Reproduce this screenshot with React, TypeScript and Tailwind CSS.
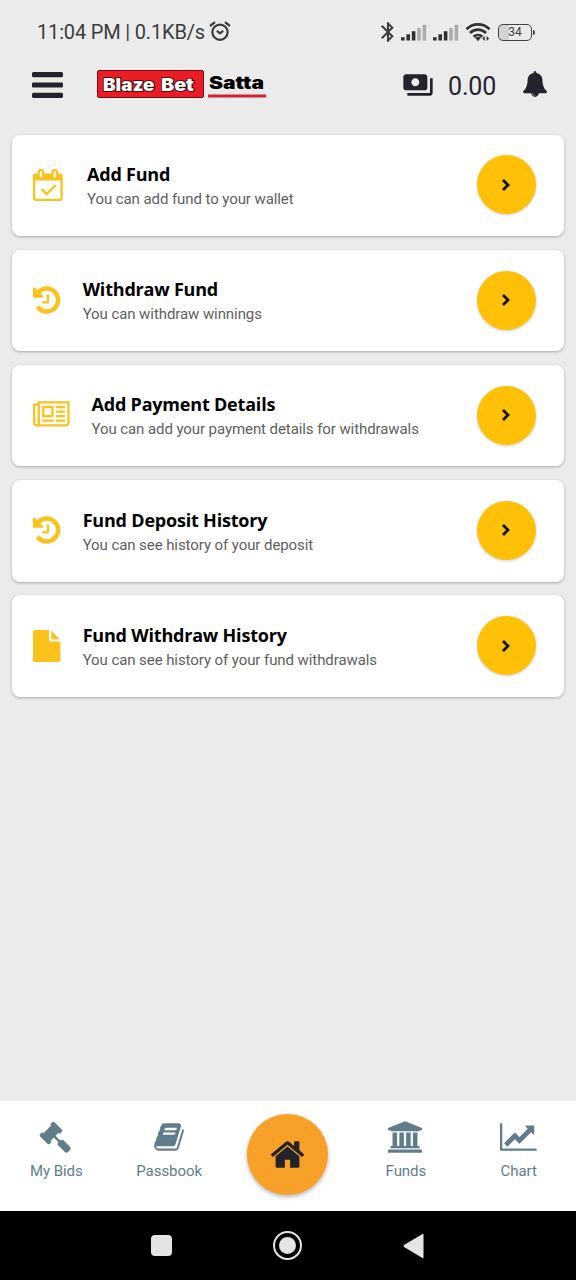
import type { ReactNode } from "react";
import { MdBluetooth, MdPayments } from "react-icons/md";

interface GlyphProps {
  box: string;
  d: string;
  className: string;
}

function Glyph({ box, d, className }: GlyphProps) {
  return (
    <svg viewBox={box} fill="currentColor" className={className} aria-hidden="true">
      <path d={d} />
    </svg>
  );
}

const paths = {
  bars: "M1664 1344v128q0 26-19 45t-45 19h-1408q-26 0-45-19t-19-45v-128q0-26 19-45t45-19h1408q26 0 45 19t19 45zm0-512v128q0 26-19 45t-45 19h-1408q-26 0-45-19t-19-45v-128q0-26 19-45t45-19h1408q26 0 45 19t19 45zm0-512v128q0 26-19 45t-45 19h-1408q-26 0-45-19t-19-45v-128q0-26 19-45t45-19h1408q26 0 45 19t19 45z",
  bell: "M912 1696q0-16-16-16-59 0-101.5-42.5t-42.5-101.5q0-16-16-16t-16 16q0 73 51.5 124.5t124.5 51.5q16 0 16-16zm816-288q0 52-38 90t-90 38h-448q0 106-75 181t-181 75-181-75-75-181h-448q-52 0-90-38t-38-90q50-42 91-88t85-119.5 74.5-158.5 50-206 19.5-260q0-152 117-282.5t307-158.5q-8-19-8-39 0-40 28-68t68-28 68 28 28 68q0 20-8 39 190 28 307 158.5t117 282.5q0 139 19.5 260t50 206 74.5 158.5 85 119.5 91 88z",
  calendar:
    "M1303 964l-512 512q-10 9-23 9t-23-9l-288-288q-9-10-9-23t9-22l46-46q9-9 22-9t23 9l220 220 444-444q10-9 23-9t22 9l46 46q9 9 9 22t-9 23zm-1175 700h1408v-1024h-1408v1024zm384-1216v-288q0-14-9-23t-23-9h-64q-14 0-23 9t-9 23v288q0 14 9 23t23 9h64q14 0 23-9t9-23zm768 0v-288q0-14-9-23t-23-9h-64q-14 0-23 9t-9 23v288q0 14 9 23t23 9h64q14 0 23-9t9-23zm384-64v1280q0 52-38 90t-90 38h-1408q-52 0-90-38t-38-90v-1280q0-52 38-90t90-38h128v-96q0-66 47-113t113-47h64q66 0 113 47t47 113v96h384v-96q0-66 47-113t113-47h64q66 0 113 47t47 113v96h128q52 0 90 38t38 90z",
  history:
    "M1664 896q0 156-61 298t-164 245-245 164-298 61q-172 0-327-72.5t-264-204.5q-7-10-6.5-22.5t8.5-20.5l137-138q10-9 25-9 16 2 23 12 73 95 179 147t225 52q104 0 198.5-40.5t163.5-109.5 109.5-163.5 40.5-198.5-40.5-198.5-109.5-163.5-163.5-109.5-198.5-40.5q-98 0-188 35.5t-160 101.5l137 138q31 30 14 69-17 40-59 40h-448q-26 0-45-19t-19-45v-448q0-42 40-59 39-17 69 14l130 129q107-101 244.5-156.5t284.5-55.5q156 0 298 61t245 164 164 245 61 298zm-640-288v448q0 14-9 23t-23 9h-320q-14 0-23-9t-9-23v-64q0-14 9-23t23-9h224v-352q0-14 9-23t23-9h64q14 0 23 9t9 23z",
  newspaper:
    "M1024 512h-384v384h384v-384zm128 640v128h-640v-128h640zm0-768v640h-640v-640h640zm640 768v128h-512v-128h512zm0-256v128h-512v-128h512zm0-256v128h-512v-128h512zm0-256v128h-512v-128h512zm-1536 960v-960h-128v960q0 26 19 45t45 19 45-19 19-45zm1664 0v-1088h-1536v1088q0 33-11 64h1483q26 0 45-19t19-45zm128-1216v1216q0 80-56 136t-136 56h-1664q-80 0-136-56t-56-136v-1088h256v-128h1792z",
  file: "M1152 512v-472q22 14 36 28l408 408q14 14 28 36h-472zm-128 32q0 40 28 68t68 28h544v1056q0 40-28 68t-68 28h-1344q-40 0-68-28t-28-68v-1600q0-40 28-68t68-28h800v544z",
  gavel:
    "M1771 1536q0 53-37 90l-107 108q-39 37-91 37-53 0-90-37l-363-364q-38-36-38-90 0-53 43-96l-256-256-126 126q-14 14-34 14t-34-14q2 2 12.5 12t12.5 13 10 11.5 10 13.5 6 13.5 5.5 16.5 1.5 18q0 38-28 68-3 3-16.5 18t-19 20.5-18.5 16.5-22 15.5-22 9-26 4.5q-40 0-68-28l-408-408q-28-28-28-68 0-13 4.5-26t9-22 15.5-22 16.5-18.5 20.5-19 18-16.5q30-28 68-28 10 0 18 1.5t16.5 5.5 13.5 6 13.5 10 11.5 10 13 12.5 12 12.5q-14-14-14-34t14-34l348-348q14-14 34-14t34 14q-2-2-12.5-12t-12.5-13-10-11.5-10-13.5-6-13.5-5.5-16.5-1.5-18q0-38 28-68 3-3 16.5-18t19-20.5 18.5-16.5 22-15.5 22-9 26-4.5q40 0 68 28l408 408q28 28 28 68 0 13-4.5 26t-9 22-15.5 22-16.5 18.5-20.5 19-18 16.5q-30 28-68 28-10 0-18-1.5t-16.5-5.5-13.5-6-13.5-10-11.5-10-13-12.5-12-12.5q14 14 14 34t-14 34l-126 126 256 256q43-43 96-43 52 0 91 37l363 363q37 39 37 91z",
  book: "M1703 478q40 57 18 129l-275 906q-19 64-76.5 107.5t-122.5 43.5h-923q-77 0-148.5-53.5t-99.5-131.5q-24-67-2-127 0-4 3-27t4-37q1-8-3-21.5t-3-19.5q2-11 8-21t16.5-23.5 16.5-23.5q23-38 45-91.5t30-91.5q3-10 .5-30t-.5-28q3-11 17-28t17-23q21-36 42-92t25-90q1-9-2.5-32t.5-28q4-13 22-30.5t22-22.5q19-26 42.5-84.5t27.5-96.5q1-8-3-25.5t-2-26.5q2-8 9-18t18-23 17-21q8-12 16.5-30.5t15-35 16-36 19.5-32 26.5-23.5 36-11.5 47.5 5.5l-1 3q38-9 51-9h761q74 0 114 56t18 130l-274 906q-36 119-71.5 153.5t-128.5 34.5h-869q-27 0-38 15-11 16-1 43 24 70 144 70h923q29 0 56-15.5t35-41.5l300-987q7-22 5-57 38 15 59 43zm-1064 2q-4 13 2 22.5t20 9.5h608q13 0 25.5-9.5t16.5-22.5l21-64q4-13-2-22.5t-20-9.5h-608q-13 0-25.5 9.5t-16.5 22.5zm-83 256q-4 13 2 22.5t20 9.5h608q13 0 25.5-9.5t16.5-22.5l21-64q4-13-2-22.5t-20-9.5h-608q-13 0-25.5 9.5t-16.5 22.5z",
  home: "M1472 992v480q0 26-19 45t-45 19h-384v-384h-256v384h-384q-26 0-45-19t-19-45v-480q0-1 .5-3t.5-3l575-474 575 474q1 2 1 6zm223-69l-62 74q-8 9-21 11h-3q-13 0-21-7l-692-577-692 577q-12 8-24 7-13-2-21-11l-62-74q-8-10-7-23.5t11-21.5l719-599q32-26 76-26t76 26l244 204v-195q0-14 9-23t23-9h192q14 0 23 9t9 23v408l219 182q10 8 11 21.5t-7 23.5z",
  bank: "M960 0l960 384v128h-128q0 26-20.5 45t-48.5 19h-1526q-28 0-48.5-19t-20.5-45h-128v-128zm-704 640h256v768h128v-768h256v768h128v-768h256v768h128v-768h256v768h59q28 0 48.5 19t20.5 45v64h-1664v-64q0-26 20.5-45t48.5-19h59v-768zm1595 960q28 0 48.5 19t20.5 45v128h-1920v-128q0-26 20.5-45t48.5-19h1782z",
  chart:
    "M2048 1536v128h-2048v-1536h128v1408h1920zm-128-1248v435q0 21-19.5 29.5t-35.5-7.5l-121-121-633 633q-10 10-23 10t-23-10l-233-233-416 416-192-192 585-585q10-10 23-10t23 10l233 233 464-464-121-121q-16-16-7.5-35.5t29.5-19.5h435q14 0 23 9t9 23z",
};

const funds = [
  {
    title: "Add Fund",
    text: "You can add fund to your wallet",
    box: "0 0 1664 1792",
    d: paths.calendar,
    size: "w-[29.7px] mr-[24.1px]",
  },
  {
    title: "Withdraw Fund",
    text: "You can withdraw winnings",
    box: "128 0 1536 1792",
    d: paths.history,
    size: "w-[27.4px] mr-[22.1px]",
  },
  {
    title: "Add Payment Details",
    text: "You can add your payment details for withdrawals",
    box: "0 0 2048 1792",
    d: paths.newspaper,
    size: "w-[36.6px] mr-[21.7px]",
  },
  {
    title: "Fund Deposit History",
    text: "You can see history of your deposit",
    box: "128 0 1536 1792",
    d: paths.history,
    size: "w-[27.4px] mr-[22.1px]",
  },
  {
    title: "Fund Withdraw History",
    text: "You can see history of your fund withdrawals",
    box: "128 0 1536 1792",
    d: paths.file,
    size: "w-[27.4px] mr-[22.1px]",
  },
];

function AlarmIcon() {
  return (
    <svg viewBox="0 0 22 20" fill="none" stroke="currentColor" strokeWidth="2.2" className="mb-[2px] h-5 w-[22px]">
      <circle cx="11" cy="11.2" r="7.6" />
      <path d="M7.8 9.8 11 12.400l3.200-2.500M1 5 6 1.200M21 5 16 1.200" />
    </svg>
  );
}

function SignalIcon() {
  return (
    <svg viewBox="0 0 26 17" className="h-[17px] w-[26px]" fill="#333">
      <rect x="0" y="13.2" width="3.6" height="3.3" />
      <rect x="5.4" y="10.3" width="3.6" height="6.2" />
      <rect x="10.8" y="7.2" width="3.6" height="9.3" />
      <rect x="16.2" y="4" width="3.6" height="12.5" fill="#acacac" />
      <rect x="21.6" y="0.8" width="3.6" height="15.7" fill="#acacac" />
    </svg>
  );
}

function WifiIcon() {
  return (
    <svg viewBox="0 0 26 20" fill="none" stroke="#333" strokeWidth="2.7" className="h-5 w-[26px]">
      <path d="M1.500 7.200C8 .7 18 .7 24.500 7.200M5 11c4.600-4.400 11.400-4.400 16 0M8.600 14.700c2.500-2.300 6.300-2.300 8.800 0" />
      <path d="M10 15.800q3-2 6 0l-3 3.400z" fill="#333" stroke="none" />
      <path d="M19.800 14v5l-2.600-2.500zM21.600 14v5l2.600-2.500z" fill="#333" stroke="none" />
    </svg>
  );
}

function StatusBar() {
  return (
    <div className="flex h-[64px] items-center pr-[41px] pl-[37px] text-[#3c3c3c]">
      <span className="w-[172px] whitespace-nowrap text-[20px] leading-none tracking-[-0.17px]">
        11:04 PM | 0.1KB/s
      </span>
      <AlarmIcon />
      <div className="ml-auto flex items-center">
        <MdBluetooth className="mr-[1px] h-6 w-6" />
        <SignalIcon />
        <span className="w-[6px]" />
        <SignalIcon />
        <span className="w-[6px]" />
        <WifiIcon />
        <div className="ml-[7px] flex h-[17px] w-[34px] items-center justify-center rounded-[5px] border-[1.5px] border-[#444] bg-linear-to-r from-[#d3d3d3] from-30% to-transparent to-30% text-[12px] leading-none">
          34
        </div>
        <span className="ml-[1px] h-[5px] w-[2px] rounded-r bg-[#444]" />
      </div>
    </div>
  );
}

function Logo() {
  return (
    <svg
      viewBox="0 0 172 30"
      className="mb-[2px] ml-[33px] h-[30px] w-[172px]"
      fontFamily="Inter, sans-serif"
      fontWeight="900"
      fontSize="17"
    >
      <rect x="1.5" y="1.500" width="106" height="27" rx="1.500" fill="#ed1c24" stroke="#6b1013" />
      <g fill="#fff" stroke="#2b0505" strokeWidth="1.600" paintOrder="stroke">
        <text x="7" y="21.500" textLength="51.500" lengthAdjust="spacingAndGlyphs">
          Blaze
        </text>
        <text x="65" y="21.500" textLength="33" lengthAdjust="spacingAndGlyphs">
          Bet
        </text>
      </g>
      <text x="113" y="20" textLength="55" lengthAdjust="spacingAndGlyphs" fill="#000">
        Satta
      </text>
      <rect x="112" y="25.500" width="58" height="3" fill="#d2232a" />
    </svg>
  );
}

function Header() {
  return (
    <header className="flex h-[42px] items-center pr-[29px] pl-[32px] text-[#23232d]">
      <Glyph box="128 256 1536 1280" d={paths.bars} className="mb-[1px] h-[26px] w-[31px]" />
      <Logo />
      <MdPayments className="ml-auto h-8 w-8" />
      <span className="mr-[27px] ml-[14px] pt-[2px] text-[25px] leading-none tracking-[-0.2px]">0.00</span>
      <Glyph box="64 0 1664 1792" d={paths.bell} className="mb-[2px] h-[26px] w-6" />
    </header>
  );
}

function FundCard({ item }: { item: (typeof funds)[number] }) {
  return (
    <div className="flex h-[101.5px] items-center rounded-[8px] bg-white pr-[28px] pl-[21.2px] shadow-[0_1px_3px_rgba(0,0,0,0.28)]">
      <Glyph box={item.box} d={item.d} className={`mb-[1px] h-8 shrink-0 text-[#fbc21b] ${item.size}`} />
      <div className="flex flex-1 flex-col pt-[1.500px]">
        <h2 className="font-['Open_Sans'] text-[18px] leading-[26px] font-bold tracking-[-0.2px] text-black">
          {item.title}
        </h2>
        <p className="text-[15px] leading-[24px] tracking-[-0.08px] text-[#606060]">{item.text}</p>
      </div>
      <button className="mb-[1px] flex size-[59px] items-center justify-center rounded-full bg-[#ffc107] pr-[1px] shadow-[0_1px_3px_rgba(0,0,0,0.2)]">
        <svg viewBox="0 0 12 14" className="h-[14px] w-3" fill="none" stroke="#111" strokeWidth="2.800">
          <path d="M3 2l5 5-5 5" />
        </svg>
      </button>
    </div>
  );
}

function NavItem({ label, children }: { label: string; children: ReactNode }) {
  return (
    <div className="flex flex-col items-center pt-5 text-[#607d8b]">
      <div className="flex h-8 items-center">{children}</div>
      <span className="mt-[7px] text-[15px] leading-[22px] tracking-[-0.06px]">{label}</span>
    </div>
  );
}

function BottomNav() {
  return (
    <nav className="grid h-[110px] grid-cols-[1fr_1fr_124px_1fr_1fr] bg-white pr-[1px]">
      <NavItem label="My Bids">
        <Glyph box="0 0 1792 1792" d={paths.gavel} className="mr-[2px] size-8" />
      </NavItem>
      <NavItem label="Passbook">
        <Glyph box="0 0 1792 1792" d={paths.book} className="mr-[1px] size-8" />
      </NavItem>
      <div className="flex justify-center pt-[13px]">
        <div className="flex size-[81px] items-center justify-center rounded-full bg-[#f9a029] shadow-[0_2px_4px_rgba(0,0,0,0.3)]">
          <Glyph box="0 0 1792 1792" d={paths.home} className="size-[37px] text-[#23232d]" />
        </div>
      </div>
      <NavItem label="Funds">
        <Glyph box="0 0 1920 1792" d={paths.bank} className="mr-[2px] h-8 w-[34px]" />
      </NavItem>
      <NavItem label="Chart">
        <Glyph box="0 0 2048 1792" d={paths.chart} className="h-8 w-[36.6px]" />
      </NavItem>
    </nav>
  );
}

function SystemNav() {
  return (
    <div className="flex h-[69px] items-center justify-center bg-black pr-[1px]">
      <span className="size-[21px] rounded-[4px] bg-[#e4e4e4]" />
      <span className="mr-[101px] ml-[101px] flex size-[29px] items-center justify-center rounded-full border-2 border-[#e4e4e4]">
        <span className="size-[17px] rounded-full bg-[#e4e4e4]" />
      </span>
      <svg viewBox="0 0 21 26" className="h-[26px] w-[21px]" fill="#e4e4e4">
        <path d="M20.500 1.500v23q0 1-1 .5L1 14q-1-1 0-2L19.500 1q1-.5 1 .5z" />
      </svg>
    </div>
  );
}

export default function App() {
  return (
    <div className="flex h-[1280px] w-[576px] flex-col overflow-hidden bg-[#ebebeb] font-[Roboto,sans-serif]">
      <StatusBar />
      <Header />
      <main className="flex flex-1 flex-col gap-[13.7px] px-3 pt-[28.6px]">
        {funds.map((item) => (
          <FundCard key={item.title} item={item} />
        ))}
      </main>
      <BottomNav />
      <SystemNav />
    </div>
  );
}
